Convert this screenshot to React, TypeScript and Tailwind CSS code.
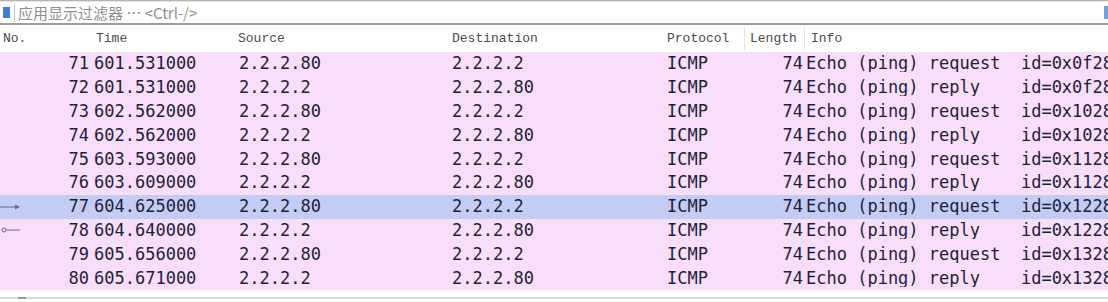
import React from 'react';

interface Packet {
  no: number;
  time: string;
  src: string;
  dst: string;
  kind: 'request' | 'reply';
  id: string;
  seq: number;
}

const packets: Packet[] = [
  { no: 71, time: '601.531000', src: '2.2.2.80', dst: '2.2.2.2', kind: 'request', id: '0x0f28', seq: 1 },
  { no: 72, time: '601.531000', src: '2.2.2.2', dst: '2.2.2.80', kind: 'reply', id: '0x0f28', seq: 1 },
  { no: 73, time: '602.562000', src: '2.2.2.80', dst: '2.2.2.2', kind: 'request', id: '0x1028', seq: 2 },
  { no: 74, time: '602.562000', src: '2.2.2.2', dst: '2.2.2.80', kind: 'reply', id: '0x1028', seq: 2 },
  { no: 75, time: '603.593000', src: '2.2.2.80', dst: '2.2.2.2', kind: 'request', id: '0x1128', seq: 3 },
  { no: 76, time: '603.609000', src: '2.2.2.2', dst: '2.2.2.80', kind: 'reply', id: '0x1128', seq: 3 },
  { no: 77, time: '604.625000', src: '2.2.2.80', dst: '2.2.2.2', kind: 'request', id: '0x1228', seq: 4 },
  { no: 78, time: '604.640000', src: '2.2.2.2', dst: '2.2.2.80', kind: 'reply', id: '0x1228', seq: 4 },
  { no: 79, time: '605.656000', src: '2.2.2.80', dst: '2.2.2.2', kind: 'request', id: '0x1328', seq: 5 },
  { no: 80, time: '605.671000', src: '2.2.2.2', dst: '2.2.2.80', kind: 'reply', id: '0x1328', seq: 5 },
];

const SELECTED = 77;

// related-packet markers in the No. column
const RequestArrow = () => (
  <svg width="22" height="8" viewBox="0 0 22 8" className="absolute left-0 top-1/2 -translate-y-1/2">
    <line x1="0" y1="4" x2="19" y2="4" stroke="#6b6b80" strokeWidth="1" />
    <path d="M15 1.5 L20 4 L15 6.5 Z" fill="#6b6b80" />
  </svg>
);

const ReplyArrow = () => (
  <svg width="22" height="8" viewBox="0 0 22 8" className="absolute left-0 top-1/2 -translate-y-1/2">
    <circle cx="4" cy="4" r="2" fill="none" stroke="#6b6b80" strokeWidth="1" />
    <line x1="6" y1="4" x2="20" y2="4" stroke="#6b6b80" strokeWidth="1" />
  </svg>
);

const Row: React.FC<{ p: Packet }> = ({ p }) => {
  const selected = p.no === SELECTED;
  const info = `Echo (ping) ${p.kind === 'request' ? 'request' : 'reply  '}  id=${p.id}, seq=${p.seq}/${p.seq * 256}, ttl=64`;
  return (
    <div
      className={`flex h-[23.8px] items-center whitespace-pre text-[17px] leading-none text-[#1e1e3a] ${
        selected ? 'bg-[#c3ccf3]' : 'bg-[#f8def8]'
      }`}
    >
      <div className="relative w-[94px] shrink-0 pr-[5px] text-right">
        {p.no === 77 && <RequestArrow />}
        {p.no === 78 && <ReplyArrow />}
        {p.no}
      </div>
      <div className="w-[144px] shrink-0">{p.time}</div>
      <div className="w-[214px] shrink-0 pl-[1px]">{p.src}</div>
      <div className="w-[215px] shrink-0">{p.dst}</div>
      <div className="w-[77px] shrink-0">ICMP</div>
      <div className="w-[59px] shrink-0 text-right">74</div>
      <div className="min-w-0 flex-1 overflow-hidden pl-[3px]">{info}</div>
    </div>
  );
};

export default function App() {
  return (
    <div className="h-[302px] w-[1108px] overflow-hidden bg-white font-['DejaVu_Sans_Mono',monospace]">
      {/* display filter bar */}
      <div className="h-[2px] border-t border-[#b4b4b4] bg-[#e6e6e6]" />
      <div className="flex h-[23px] items-center border-b-2 border-[#9c9c9c] bg-white">
        <div className="ml-[3px] h-[11px] w-[7px] bg-[#3f7fd6]" />
        <div className="ml-[4px] h-[18px] w-px bg-[#c4c4c4]" />
        <span className="ml-[3px] font-['Noto_Sans_CJK_SC',sans-serif] text-[15px] leading-none text-[#8e8e8e]">
          应用显示过滤器 … &lt;Ctrl-/&gt;
        </span>
        <div className="ml-auto h-[13px] w-[4px] bg-[#6fa4e0]" />
      </div>

      {/* column header */}
      <div className="flex h-[27px] items-center bg-white font-['Liberation_Mono',monospace] text-[13px] leading-none text-[#4a4a4a]">
        <div className="w-[94px] shrink-0 pl-[3px]">No.</div>
        <div className="w-[144px] shrink-0 pl-[2px]">Time</div>
        <div className="w-[214px] shrink-0">Source</div>
        <div className="w-[215px] shrink-0">Destination</div>
        <div className="w-[77px] shrink-0">Protocol</div>
        <div className="flex h-[22px] w-[61px] shrink-0 items-center border-x border-[#e2e2e2] pl-[5px]">Length</div>
        <div className="pl-[6px]">Info</div>
      </div>

      {/* packet list */}
      <div>
        {packets.map(p => (
          <Row key={p.no} p={p} />
        ))}
      </div>

      <div className="mt-[7px] flex h-[2px]">
        <div className="w-[18px] bg-[#d8d8d8]" />
        <div className="w-[8px] bg-[#9a9a9a]" />
        <div className="flex-1 bg-[#d8d8d8]" />
      </div>
    </div>
  );
}
